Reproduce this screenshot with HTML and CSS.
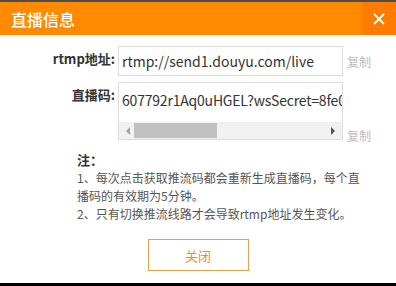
FILE: index.html
```html
<!DOCTYPE html>
<html lang="zh-CN">
<head>
    <meta charset="UTF-8">
    <title>直播信息</title>
    <link rel="stylesheet" href="styles.css">
</head>
<body>
    <div class="topline"></div>
    <div class="dialog">
        <div class="dialog-head">
            <span class="dialog-title">直播信息</span>
            <span class="dialog-close">
                <svg width="12" height="12" viewBox="0 0 12 12">
                    <path d="M1 1L11 11M11 1L1 11" stroke="#fff" stroke-width="1.8" fill="none"/>
                </svg>
            </span>
        </div>

        <div class="form">
            <div class="form-row">
                <label class="form-label">rtmp地址:</label>
                <div class="field">rtmp://send1.douyu.com/live</div>
                <span class="copy">复制</span>
            </div>
            <div class="form-row">
                <label class="form-label">直播码:</label>
                <div class="field field-code">
                    <div class="code-text">607792r1Aq0uHGEL?wsSecret=8fe02d6c1a7e4b</div>
                    <div class="scrollbar">
                        <span class="arrow arrow-left"></span>
                        <span class="thumb"></span>
                        <span class="arrow arrow-right"></span>
                    </div>
                </div>
                <span class="copy copy-bottom">复制</span>
            </div>
        </div>

        <div class="notes">
            <p class="notes-title">注：</p>
            <p>1、每次点击获取推流码都会重新生成直播码，每个直播码的有效期为5分钟。</p>
            <p>2、只有切换推流线路才会导致rtmp地址发生变化。</p>
        </div>

        <div class="actions">
            <button class="close-btn" type="button">关闭</button>
        </div>
    </div>
</body>
</html>
```

FILE: styles.css
```css
body {
    margin: 0;
    padding: 0;
    width: 396px;
    height: 286px;
    background-color: #000;
    font-family: "Noto Sans CJK SC", "Noto Sans", sans-serif;
    overflow: hidden;
}
.topline {
    height: 2px;
    background-color: #4d4d4d;
}
.dialog {
    height: 281px;
    background-color: #fff;
}
.dialog-head {
    height: 33px;
    background-color: #ff8a00;
    display: flex;
    align-items: center;
    justify-content: space-between;
}
.dialog-title {
    color: #fff;
    font-size: 16px;
    font-weight: 500;
    padding-left: 11px;
}
.dialog-close {
    width: 34px;
    height: 33px;
    background-color: #ff7c00;
    display: flex;
    align-items: center;
    justify-content: center;
}
.form {
    padding-top: 11px;
}
.form-row {
    display: grid;
    grid-template-columns: 115px 225px auto;
    column-gap: 3px;
    margin-bottom: 6px;
}
.form-label {
    text-align: right;
    font-size: 13px;
    font-weight: bold;
    color: #333;
    padding-top: 3px;
}
.field {
    height: 28px;
    border: 1px solid #ddd;
    font-size: 14px;
    color: #333;
    line-height: 28px;
    padding-left: 3px;
    white-space: nowrap;
    overflow: hidden;
}
.field-code {
    height: 56px;
    padding-left: 0;
    display: flex;
    flex-direction: column;
    justify-content: space-between;
}
.code-text {
    padding-left: 3px;
    padding-top: 3px;
    overflow: hidden;
    letter-spacing: -0.2px;
}
.scrollbar {
    height: 17px;
    background-color: #f1f1f1;
    display: flex;
    align-items: center;
}
.thumb {
    width: 83px;
    height: 15px;
    background-color: #c1c1c1;
    margin-left: 4px;
}
.arrow {
    width: 0;
    height: 0;
    border-top: 4px solid transparent;
    border-bottom: 4px solid transparent;
}
.arrow-left {
    border-right: 4px solid #a3a3a3;
    margin-left: 7px;
}
.arrow-right {
    border-left: 4px solid #505050;
    margin-left: auto;
    margin-right: 7px;
}
.copy {
    font-size: 12px;
    color: #bbb;
    align-self: center;
    padding-left: 1px;
}
.copy-bottom {
    align-self: end;
    margin-bottom: -4px;
}
.notes {
    margin: 11px 0 0 77px;
    width: 285px;
    font-size: 12px;
    line-height: 18px;
    color: #555;
}
.notes p {
    margin: 0;
}
.notes .notes-title {
    font-weight: bold;
    font-size: 13px;
    color: #333;
}
.actions {
    display: flex;
    justify-content: center;
    margin-top: 16px;
}
.close-btn {
    width: 101px;
    height: 32px;
    background-color: #fff;
    border: 1px solid #e6a04a;
    color: #f28c1a;
    font-family: inherit;
    font-size: 13px;
    cursor: pointer;
}
```
